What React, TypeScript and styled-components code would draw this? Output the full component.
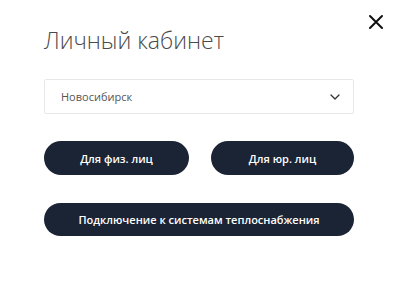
import React from 'react';
import styled, { createGlobalStyle } from 'styled-components';

const GlobalStyle = createGlobalStyle`
	html, body {
		margin: 0;
		padding: 0;
		background: #ffffff;
	}
	body {
		font-family: 'Open Sans', 'Noto Sans', sans-serif;
	}
`;

const Modal = styled.div`
	position: relative;
	width: 400px;
	height: 292px;
	box-sizing: border-box;
	padding: 24px 46px 0 44px;
	background: #ffffff;
`;

const Close = styled.button`
	position: absolute;
	top: 14px;
	right: 16px;
	width: 16px;
	height: 16px;
	padding: 0;
	border: none;
	background: none;
	cursor: pointer;
	color: #111;
`;

const Title = styled.h1`
	margin: 0 0 23px;
	font-size: 23px;
	line-height: 32px;
	font-weight: 300;
	color: #4a4a4a;
`;

const Select = styled.div`
	display: flex;
	align-items: center;
	justify-content: space-between;
	height: 35px;
	box-sizing: border-box;
	padding: 0 13px 0 16px;
	border: 1px solid #e8e8e8;
	border-radius: 2px;
	font-size: 11px;
	color: #555;
	cursor: pointer;
`;

const Row = styled.div`
	display: grid;
	grid-template-columns: 145px 143px;
	column-gap: 22px;
	margin-top: 27px;
`;

const Button = styled.button<{ $wide?: boolean }>`
	display: flex;
	align-items: center;
	justify-content: center;
	width: 100%;
	height: ${p => (p.$wide ? '33px' : '34px')};
	margin-top: ${p => (p.$wide ? '28px' : '0')};
	border: none;
	border-radius: 17px;
	background: #1b2434;
	color: #ffffff;
	font-family: 'Open Sans', 'Noto Sans', sans-serif;
	font-size: 11px;
	font-weight: 600;
	cursor: pointer;
`;

export default function App() {
	return (
		<>
			<GlobalStyle />
			<Modal>
				<Close aria-label="Закрыть">
					<svg width="16" height="16" viewBox="0 0 16 16">
						<path d="M2 2 L14 14 M14 2 L2 14" stroke="currentColor" strokeWidth="2" strokeLinecap="round" />
					</svg>
				</Close>
				<Title>Личный кабинет</Title>
				<Select>
					<span>Новосибирск</span>
					<svg width="10" height="6" viewBox="0 0 10 6">
						<path d="M1 1 L5 5 L9 1" fill="none" stroke="#333" strokeWidth="1.3" strokeLinecap="round" strokeLinejoin="round" />
					</svg>
				</Select>
				<Row>
					<Button>Для физ. лиц</Button>
					<Button>Для юр. лиц</Button>
				</Row>
				<Button $wide>Подключение к системам теплоснабжения</Button>
			</Modal>
		</>
	);
}
